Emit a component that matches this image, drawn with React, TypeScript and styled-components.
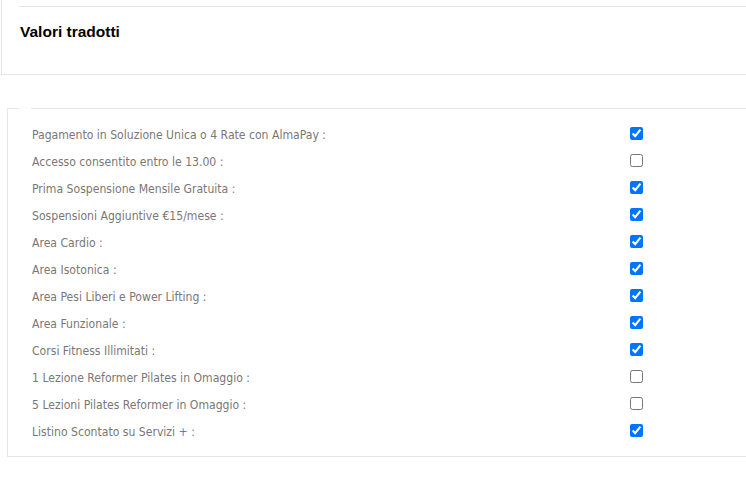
import React from "react";
import styled, { createGlobalStyle } from "styled-components";

const Global = createGlobalStyle`
  html, body {
    margin: 0;
    padding: 0;
    background: #ffffff;
    overflow: hidden;
  }
  body {
    font-family: "Liberation Sans", Arial, sans-serif;
  }
`;

const Page = styled.div`
  width: 100vw;
  overflow: hidden;
  display: flex;
  flex-direction: column;
`;

const TitleCard = styled.section`
  width: 800px;
  margin-left: 1px;
  border-left: 1px solid #e6e6e6;
  border-bottom: 1px solid #e6e6e6;
  padding: 6px 0 0 17px;
`;

const TitleHeader = styled.div`
  border-top: 1px solid #e6e6e6;
  padding: 16px 0 33px 1px;
`;

const Title = styled.h3`
  margin: 0;
  font-family: "Liberation Sans", Arial, sans-serif;
  font-size: 15.5px;
  font-weight: 700;
  color: #000;
  line-height: 18px;
`;

const Fieldset = styled.fieldset`
  width: 800px;
  margin: 33px 0 0 7px;
  border: 1px solid #e6e6e6;
  padding: 12px 0 11px 24px;
  min-width: 0;
`;

const Legend = styled.legend`
  margin-left: -13px;
  padding: 0 6px;
  height: 0;
  line-height: 0;
  font-size: 0;
`;

const List = styled.div`
  display: grid;
  grid-template-columns: 594px 1fr;
  grid-auto-rows: 27px;
  align-items: center;
`;

const Label = styled.span`
  font-family: "DejaVu Sans Condensed", "DejaVu Sans", Tahoma, sans-serif;
  font-size: 12.1px;
  color: #7a7775;
  white-space: nowrap;
`;

const Accent = styled.span`
  color: #3a87d6;
`;

const Check = styled.input`
  margin: 0 0 0 4px;
  width: 13px;
  height: 13px;
`;

type Item = { label: React.ReactNode; checked: boolean };

const items: Item[] = [
  { label: "Pagamento in Soluzione Unica o 4 Rate con AlmaPay :", checked: true },
  { label: "Accesso consentito entro le 13.00 :", checked: false },
  { label: "Prima Sospensione Mensile Gratuita :", checked: true },
  { label: "Sospensioni Aggiuntive €15/mese :", checked: true },
  { label: "Area Cardio :", checked: true },
  { label: "Area Isotonica :", checked: true },
  { label: "Area Pesi Liberi e Power Lifting :", checked: true },
  { label: "Area Funzionale :", checked: true },
  { label: "Corsi Fitness Illimitati :", checked: true },
  { label: "1 Lezione Reformer Pilates in Omaggio :", checked: false },
  { label: "5 Lezioni Pilates Reformer in Omaggio :", checked: false },
  {
    label: (
      <>
        Listino Scontato su Servizi <Accent>+</Accent> :
      </>
    ),
    checked: true,
  },
];

export default function App() {
  return (
    <>
      <Global />
      <Page>
        <TitleCard>
          <TitleHeader>
            <Title>Valori tradotti</Title>
          </TitleHeader>
        </TitleCard>
        <Fieldset>
          <Legend />
          <List>
            {items.map((it, i) => (
              <React.Fragment key={i}>
                <Label>{it.label}</Label>
                <span>
                  <Check type="checkbox" checked={it.checked} readOnly />
                </span>
              </React.Fragment>
            ))}
          </List>
        </Fieldset>
      </Page>
    </>
  );
}
